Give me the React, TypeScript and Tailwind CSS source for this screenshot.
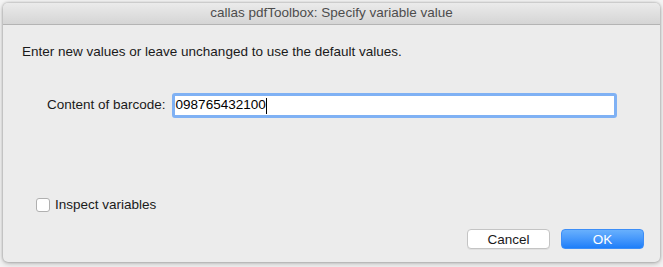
export default function App() {
  return (
    <div className="w-[663px] h-[267px] bg-[#f4f4f4] p-[3px] pb-[5px] font-['Liberation_Sans',Arial,sans-serif] text-[13.5px] text-[#1a1a1a]">
      <div className="h-full flex flex-col bg-[#ececec] rounded-[5px] overflow-hidden shadow-[0_0_3px_rgba(0,0,0,0.35),0_2px_6px_rgba(0,0,0,0.2)]">
        {/* Title bar */}
        <div className="h-[22px] shrink-0 flex items-center justify-center bg-gradient-to-b from-[#ebebeb] to-[#d5d5d5] border-b border-[#b4b4b4] text-[#4d4d4d]">
          callas pdfToolbox: Specify variable value
        </div>

        <div className="flex-1 flex flex-col pl-[19px] pr-[16px]">
          <p className="mt-[19px] leading-[16px]">
            Enter new values or leave unchanged to use the default values.
          </p>

          <div className="mt-[33px] flex items-center">
            <label className="ml-[25px] mr-[6px]">Content of barcode:</label>
            <div className="w-[445px] h-[25px] rounded-[3px] border-[3px] border-[#7fb1f4] bg-white flex items-center pl-[1px]">
              <span className="text-black">098765432100</span>
              <span className="w-px h-[16px] bg-black" />
            </div>
          </div>

          <div className="mt-[77px] ml-[14px] flex items-center gap-[5px]">
            <span className="w-[14px] h-[14px] rounded-[3px] bg-white border border-[#b0b0b0]" />
            <span>Inspect variables</span>
          </div>

          <div className="mt-[14px] flex justify-end gap-[11px]">
            <button className="w-[83px] h-[20px] rounded-[4px] bg-white border border-[#c4c4c4] shadow-[0_1px_0_rgba(0,0,0,0.05)] text-[#1a1a1a] leading-none">
              Cancel
            </button>
            <button className="w-[83px] h-[20px] rounded-[4px] bg-gradient-to-b from-[#68b0fd] to-[#1c7ef9] border border-[#3d8ef7] text-white leading-none">
              OK
            </button>
          </div>
        </div>
      </div>
    </div>
  )
}
